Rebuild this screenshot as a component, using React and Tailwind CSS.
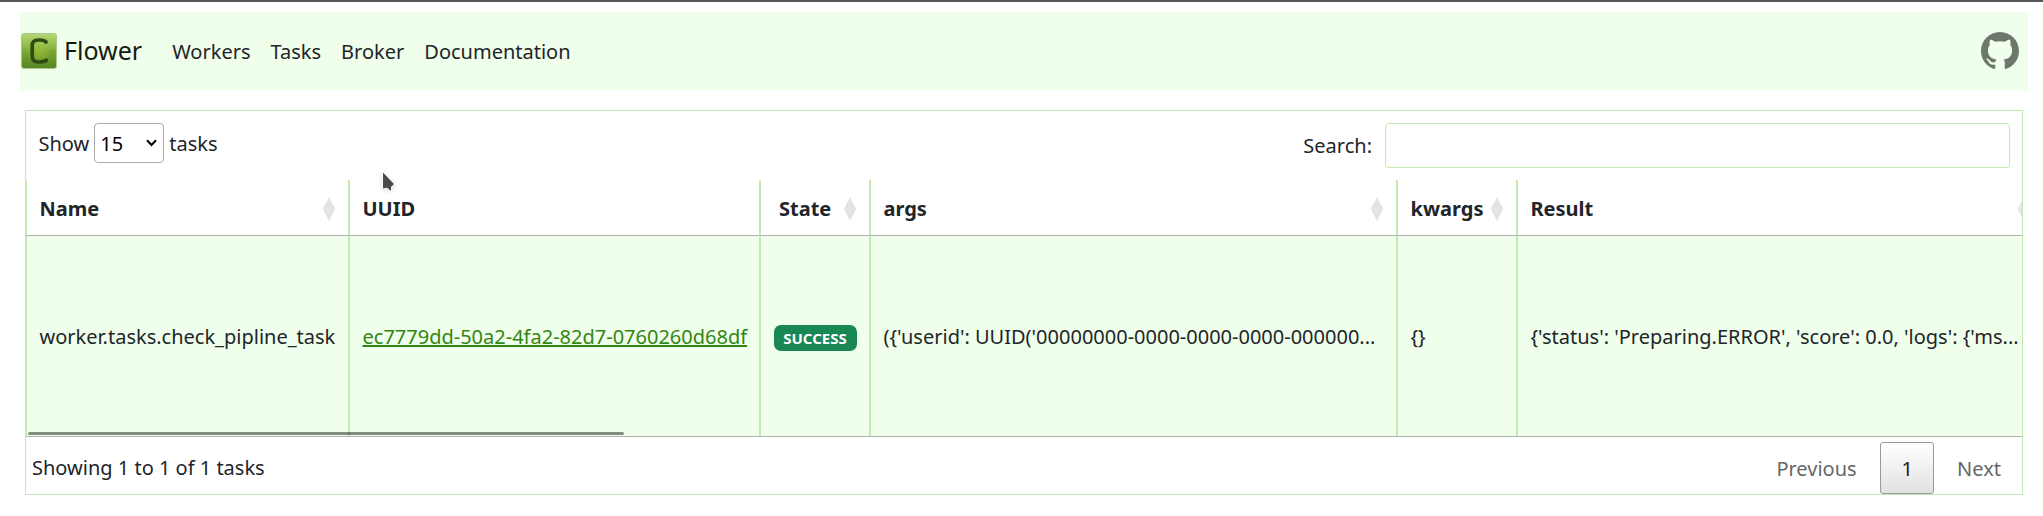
import React from "react";
import { BsGithub } from "react-icons/bs";

function Logo() {
  return (
    <svg width="36" height="36" viewBox="0 0 36 36" aria-hidden="true">
      <defs>
        <linearGradient id="tile" x1="0" y1="0" x2="0" y2="1">
          <stop offset="0" stopColor="#b5d777" />
          <stop offset="0.4" stopColor="#8cb744" />
          <stop offset="0.5" stopColor="#7ba634" />
          <stop offset="1" stopColor="#568423" />
        </linearGradient>
        <radialGradient id="glow" cx="0.5" cy="0.5" r="0.4">
          <stop offset="0" stopColor="#a9c63b" stopOpacity="0.6" />
          <stop offset="1" stopColor="#a9c63b" stopOpacity="0" />
        </radialGradient>
      </defs>
      <rect x="0.5" y="0.5" width="35" height="35" rx="2.5" fill="url(#tile)" stroke="#a9c98a" />
      <rect x="1" y="1" width="34" height="34" rx="2" fill="url(#glow)" />
      <path
        d="M25 9C23.6 7.2 20.5 6.9 17.5 7C13.5 7.2 11.4 8.4 11.2 11.5V23.5C11.4 27.8 13.8 29 17.5 29C21 29 23.6 28.6 25.3 27.3"
        fill="none"
        stroke="#2c4d12"
        strokeWidth="3.7"
        strokeLinecap="round"
      />
    </svg>
  );
}

function SortIcon() {
  return (
    <svg width="12" height="24" viewBox="0 0 12 24" className="mt-[3px] shrink-0" aria-hidden="true">
      <path d="M6 0L12 11.5H0Z" fill="#e2e4e3" />
      <path d="M6 24L12 12.5H0Z" fill="#e2e4e3" />
      <path d="M0 11.5H12V12.5H0Z" fill="#d9dbda" />
    </svg>
  );
}

function Head({ children, sortable = true, center = false }) {
  return (
    <th className="h-14 border-b border-l-2 border-b-[#b0b0b0] border-l-[#c1ebb3] p-0 pr-[13px] pl-[12.5px] text-left font-bold">
      <div className="flex items-center justify-between">
        <span className={center ? "pt-0.5 pl-[5.5px]" : "pt-0.5"}>{children}</span>
        {sortable && <SortIcon />}
      </div>
    </th>
  );
}

function Cell({ children }) {
  return (
    <td className="h-50 border-l-2 border-[#c1ebb3] bg-[#f0ffeb] p-0 pt-0.5 pl-[12.5px] align-middle">
      {children}
    </td>
  );
}

export default function App() {
  return (
    <div className="relative h-[516px] w-[2043px] overflow-hidden border-t-2 border-[#54575c] bg-white pt-[10px] font-['Noto_Sans',sans-serif] text-[20px] leading-[30px] text-[#212529]">
      <nav className="mr-[15px] ml-5 flex h-[78px] items-center bg-[#f0ffeb] pr-[9px] pl-[1px]">
        <Logo />
        <span className="ml-[7px] pb-0.5 text-[25px] leading-[37px] text-[#151a15]">Flower</span>
        <div className="ml-[30px] flex gap-5 pt-px">
          <a>Workers</a>
          <a>Tasks</a>
          <a>Broker</a>
          <a>Documentation</a>
        </div>
        <BsGithub className="ml-auto size-[38px] text-[#6d786c]" />
      </nav>

      <main className="mt-5 ml-[25px] flex h-[385px] w-[1998px] flex-col border border-[#c1ebb3]">
        <div className="flex h-[69px] items-start justify-between pt-3 pr-3 pl-[12.5px]">
          <label className="flex h-10 items-center">
            <span className="pt-0.5">Show</span>
            <span className="mx-[5px] flex h-10 w-[70px] items-center justify-between rounded-[4px] border border-[#aaa] pr-[6px] pl-[5px] text-black">
              <span className="pt-0.5">15</span>
              <svg width="11" height="8" viewBox="0 0 11 8" fill="none" stroke="#000" strokeWidth="2">
                <path d="M1 1.3L5.5 6L10 1.3" />
              </svg>
            </span>
            <span className="pt-0.5">tasks</span>
          </label>
          <label className="flex h-[45px] items-center">
            Search:
            <input className="ml-[13px] h-[45px] w-[625px] rounded-[4px] border border-[#c1ebb3] bg-white" />
          </label>
        </div>

        <div className="relative h-[257px] overflow-hidden border-b border-[#b0b0b0]">
          <table className="-ml-px w-[2018px] table-fixed border-separate border-spacing-0">
            <colgroup>
              <col className="w-[323px]" />
              <col className="w-[411px]" />
              <col className="w-[110px]" />
              <col className="w-[527px]" />
              <col className="w-[120px]" />
              <col className="w-[527px]" />
            </colgroup>
            <thead>
              <tr>
                <Head>Name</Head>
                <Head sortable={false}>UUID</Head>
                <Head center>State</Head>
                <Head>args</Head>
                <Head>kwargs</Head>
                <Head>Result</Head>
              </tr>
            </thead>
            <tbody>
              <tr className="whitespace-nowrap">
                <Cell>worker.tasks.check_pipline_task</Cell>
                <Cell>
                  <a className="text-[#348613] underline">ec7779dd-50a2-4fa2-82d7-0760260d68df</a>
                </Cell>
                <Cell>
                  <span className="mt-px flex h-[26px] w-[83px] items-center justify-center rounded-[7px] bg-[#198754] pt-[2px] text-[15px] leading-[15px] font-bold text-white">
                    SUCCESS
                  </span>
                </Cell>
                <Cell>{"({'userid': UUID('00000000-0000-0000-0000-000000..."}</Cell>
                <Cell>{"{}"}</Cell>
                <Cell>{"{'status': 'Preparing.ERROR', 'score': 0.0, 'logs': {'ms..."}</Cell>
              </tr>
            </tbody>
          </table>
          <div className="absolute bottom-px left-[2px] h-[3px] w-[596px] rounded-full bg-black/45" />
        </div>

        <div className="flex grow items-start justify-between pt-[5px] pr-3 pl-[6px]">
          <span className="pt-[11px]">Showing 1 to 1 of 1 tasks</span>
          <div className="flex h-[52px] items-center text-[#666]">
            <span className="pt-0.5">Previous</span>
            <span className="mr-[23px] ml-[23.5px] flex h-[52px] w-[54px] items-center justify-center rounded-[3px] border border-[#999] bg-linear-to-b from-white to-[#e1e1e1] pt-0.5 text-[#222]">
              1
            </span>
            <span className="pt-0.5 pr-[9px]">Next</span>
          </div>
        </div>
      </main>

      <svg
        className="absolute top-[168px] left-[380px] drop-shadow-sm"
        width="18"
        height="26"
        viewBox="0 0 18 26"
        aria-hidden="true"
      >
        <path
          d="M3 2.5V18.5L7 17.8L11 21V17L14 14Z"
          fill="#4b4b4b"
          stroke="#fff"
          strokeWidth="1.6"
          paintOrder="stroke"
        />
      </svg>
    </div>
  );
}
